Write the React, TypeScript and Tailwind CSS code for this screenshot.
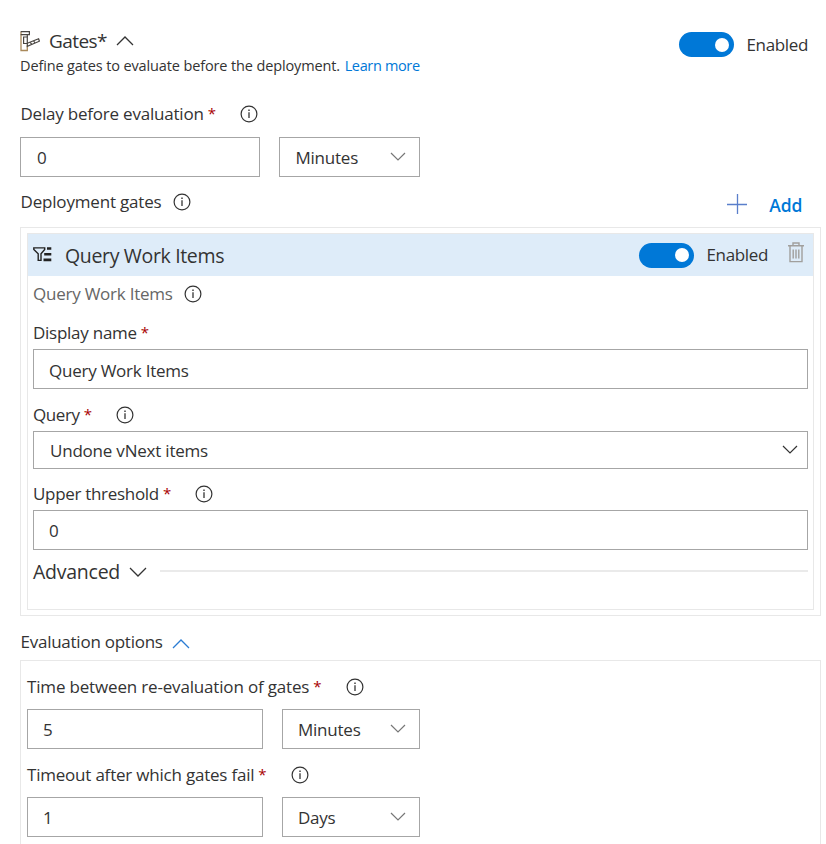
import type { ReactNode } from 'react';

function Info({ className = '' }: { className?: string }) {
  return (
    <svg className={`h-[18px] w-[18px] shrink-0 ${className}`} viewBox="0 0 18 18" fill="none" stroke="#333333">
      <circle cx="9" cy="9" r="7.9" strokeWidth="1.2" />
      <path d="M9 7.3V13" strokeWidth="1.3" />
      <path d="M9 4.6V6" strokeWidth="1.4" />
    </svg>
  );
}

function Chevron({ up = false, className = '' }: { up?: boolean; className?: string }) {
  return (
    <svg className={`h-[10px] w-[18px] shrink-0 ${className}`} viewBox="0 0 18 10" fill="none" stroke="currentColor">
      <path d={up ? 'M1 9L9 1L17 9' : 'M1 1L9 9L17 1'} strokeWidth="1.25" />
    </svg>
  );
}

function SelectChevron({ className = '' }: { className?: string }) {
  return (
    <svg className={`h-[9px] w-[16px] shrink-0 ${className}`} viewBox="0 0 16 9" fill="none" stroke="currentColor">
      <path d="M1 1L8 8L15 1" strokeWidth="1.2" />
    </svg>
  );
}

function GateIcon() {
  return (
    <svg className="h-[21px] w-[20px] shrink-0" viewBox="0 0 20 21" fill="none" stroke="#4a4642" strokeWidth="1.2">
      <path d="M1 0.7V19.5H7.3V14.5" stroke="#a9895a" strokeWidth="1.3" />
      <path d="M0.7 0.7H9.4V3.6H0.7M7.3 3.6V6" />
      <path d="M3.6 6H7.3V12.5H3.6Z" />
      <path d="M7.3 12.2L18.6 7.8L19.4 10.2L7.3 15.3Z" />
      <path d="M10.2 11.4L11.6 13.2M13.6 10L15 11.8" />
    </svg>
  );
}

function QueryIcon() {
  return (
    <svg className="mb-[2px] h-[15px] w-[19px] shrink-0" viewBox="0 0 19 15" fill="none" stroke="#222222">
      <path d="M0.8 0.9H11.7V2.4L8 6.8V13.4H5.2V6.8L0.8 2.4Z" strokeWidth="1.4" />
      <path d="M14 1.5H18.3M11.2 7.3H18.3M10.5 12.9H18.3" strokeWidth="2.6" />
    </svg>
  );
}

function TrashIcon() {
  return (
    <svg className="mb-[6px] h-[21px] w-[16px] shrink-0" viewBox="0 0 16 21" fill="none" stroke="#a19f9d" strokeWidth="1.4">
      <path d="M0 3.7H16M5 3.5V1H11V3.5M2 4V19.6H14V4" />
      <path d="M5.2 7.5V16.5M8 7.5V16.5M10.8 7.5V16.5" />
    </svg>
  );
}

function Toggle() {
  return (
    <span className="flex h-[25px] w-[55px] shrink-0 items-center justify-end rounded-full bg-[#0078d7] pr-[5px]">
      <span className="h-[14px] w-[14px] rounded-full bg-white" />
    </span>
  );
}

function Star() {
  return <span className="ml-[4px] mb-[3px] w-[8px] text-[15px] text-[#a80000]">*</span>;
}

function Label({ children, className = '' }: { children: ReactNode; className?: string }) {
  return <div className={`flex h-6 items-center ${className}`}>{children}</div>;
}

function Field({ children, className = 'px-[15px]' }: { children: ReactNode; className?: string }) {
  return (
    <div className={`flex h-10 items-center border border-[#a6a6a6] bg-white pt-[2px] ${className}`}>
      {children}
    </div>
  );
}

function Unit({ children, className = '' }: { children: ReactNode; className?: string }) {
  return (
    <Field className={`justify-between pr-[13px] ${className}`}>
      <span className="tracking-[-0.23px]">{children}</span>
      <SelectChevron className="mb-[4px] text-[#777777]" />
    </Field>
  );
}

export default function App() {
  return (
    <div className="flex h-[844px] w-[826px] flex-col overflow-hidden whitespace-nowrap bg-white pl-5 pr-[5px] font-['Open_Sans','Noto_Sans',sans-serif] text-[17px] leading-6 tracking-[-0.21px] text-[#333333]">
      <header className="flex h-[76px] shrink-0 justify-between pt-[29px]">
        <div>
          <div className="flex h-6 items-center">
            <GateIcon />
            <span className="ml-[9px] text-[19px] tracking-[-0.57px]">Gates*</span>
            <Chevron up className="ml-[9px]" />
          </div>
          <p className="mt-px h-6 text-[14.5px] tracking-[-0.13px]">
            Define gates to evaluate before the deployment.{' '}
            <a className="ml-px tracking-[-0.35px] text-[#0078d7]">Learn more</a>
          </p>
        </div>
        <div className="mr-[13px] mt-[3px] flex h-[25px] items-center gap-[12px]">
          <Toggle />
          <span className="tracking-[-0.35px]">Enabled</span>
        </div>
      </header>

      <Label className="mt-[26px] shrink-0 pl-[0.5px]">
        <span>Delay before evaluation</span>
        <Star />
        <Info className="ml-[24px]" />
      </Label>
      <div className="mt-[11px] flex shrink-0 gap-[19px]">
        <Field className="w-[240px] pl-[16px]">0</Field>
        <Unit className="w-[141px] pl-[15.5px]">Minutes</Unit>
      </div>

      <div className="mt-[13px] flex h-[37px] shrink-0 items-start justify-between">
        <Label className="pl-[0.5px]">
          <span className="tracking-[-0.18px]">Deployment gates</span>
          <Info className="ml-[11.5px]" />
        </Label>
        <div className="mr-[18.5px] mt-[3px] flex h-6 items-center">
          <svg className="mb-[3px] h-[20px] w-[20px]" viewBox="0 0 20 20" fill="none" stroke="#5a7fcb">
            <path d="M0 10.5H20M10.5 0V20" strokeWidth="1.3" />
          </svg>
          <span className="ml-[22.5px] text-[17.5px] font-semibold tracking-normal text-[#0078d7]">Add</span>
        </div>
      </div>

      <section className="h-[389px] w-[801px] shrink-0 border border-[#e8e8e8] py-[5px] pl-[6px] pr-[5px]">
        <div className="h-[377px] w-[787px] border border-[#e8e8e8]">
          <div className="flex h-[42px] items-center bg-[#deecf9] pl-[5px] pr-[9px]">
            <QueryIcon />
            <span className="ml-[13px] mt-[2px] text-[19.5px] tracking-[-0.34px]">Query Work Items</span>
            <div className="ml-auto mr-[20px] flex items-center gap-[12px]">
              <Toggle />
              <span className="tracking-[-0.35px]">Enabled</span>
            </div>
            <TrashIcon />
          </div>
          <div className="px-[5px] pt-[6px]">
            <Label className="text-[#666666]">
              <span className="tracking-[-0.24px]">Query Work Items</span>
              <Info className="ml-[11.5px]" />
            </Label>
            <Label className="mt-[15px]">
              <span className="tracking-[-0.26px]">Display name</span>
              <Star />
            </Label>
            <Field className="mt-[4px] w-[775px] pl-[15px]">
              <span className="mt-px tracking-[-0.24px]">Query Work Items</span>
            </Field>
            <Label className="mt-[14px]">
              <span className="tracking-[-0.4px]">Query</span>
              <Star />
              <Info className="ml-[24px]" />
            </Label>
            <div className="mt-[4px] flex h-[38px] w-[775px] items-center justify-between border border-[#a6a6a6] bg-white pl-[16px] pr-[9px]">
              <span className="mt-px">Undone vNext items</span>
              <SelectChevron className="mb-[2px]" />
            </div>
            <Label className="mt-[13px]">
              <span className="tracking-[-0.31px]">Upper threshold</span>
              <Star />
              <Info className="ml-[24px]" />
            </Label>
            <Field className="mt-[4px] w-[775px] pl-[15px]">0</Field>
            <div className="mt-[10px] flex h-6 w-[775px] items-center">
              <span className="text-[19.5px] tracking-[-0.25px]">Advanced</span>
              <Chevron className="ml-[9px]" />
              <span className="ml-[13px] mb-[2px] h-[2px] flex-1 bg-[#eaeaea]" />
            </div>
          </div>
        </div>
      </section>

      <Label className="mt-[14px] shrink-0 pl-[0.5px]">
        <span className="tracking-[-0.25px]">Evaluation options</span>
        <Chevron up className="ml-[9px] mt-[3px] text-[#2b7cd3]" />
      </Label>
      <section className="mt-[6px] h-[200px] w-[801px] shrink-0 border border-[#e8e8e8] px-[6px] pt-[14px]">
        <Label>
          <span className="tracking-[-0.17px]">Time between re-evaluation of gates</span>
          <Star />
          <Info className="ml-[24.5px]" />
        </Label>
        <div className="mt-[10px] flex gap-[19px]">
          <Field className="w-[236px] pl-[15px]">5</Field>
          <Unit className="w-[138px] pl-[15px]">Minutes</Unit>
        </div>
        <Label className="mt-[14px]">
          <span className="tracking-[-0.21px]">Timeout after which gates fail</span>
          <Star />
          <Info className="ml-[24.5px]" />
        </Label>
        <div className="mt-[10px] flex gap-[19px]">
          <Field className="w-[236px] pl-[15px]">1</Field>
          <Unit className="w-[138px] pl-[15px]">Days</Unit>
        </div>
      </section>
    </div>
  );
}
